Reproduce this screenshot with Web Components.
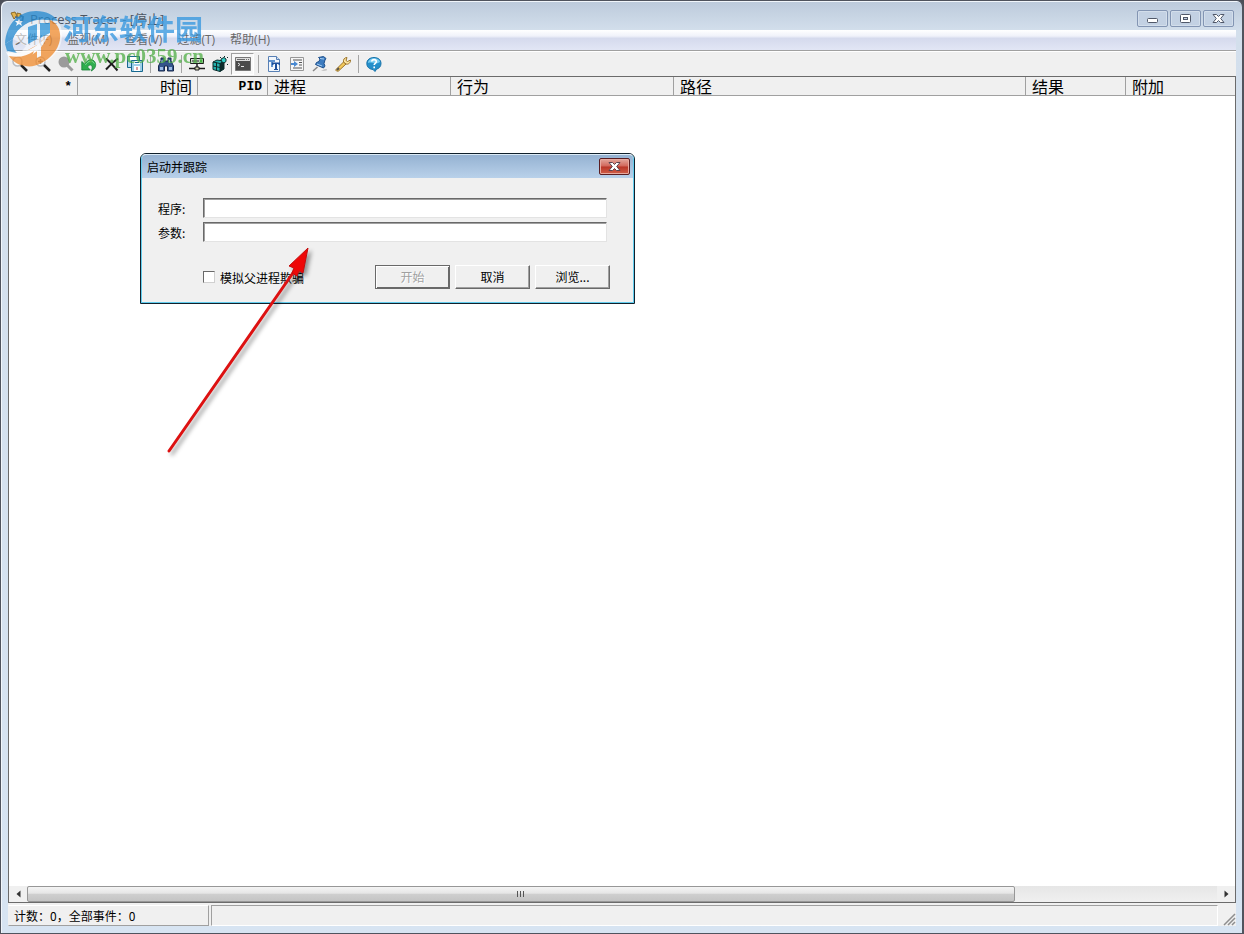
<!DOCTYPE html>
<html lang="zh-CN">
<head>
<meta charset="UTF-8">
<meta name="viewport" content="width=device-width, initial-scale=1">
<title>Process Tracer</title>
<style>
  html, body {
    height: 100%;
    margin: 0;
    background: #ffffff;
    overflow: hidden;
  }
  body {
    font-family: "Open Sans", "Noto Sans CJK SC", sans-serif;
    font-size: 12px;
    color: #000000;
  }
</style>
</head>
<body>
<app-window>
  <title-bar slot="title">Process Tracer - [停止]</title-bar>
  <menu-bar slot="menu">
    <menu-item>文件(F)</menu-item>
    <menu-item>监视(M)</menu-item>
    <menu-item>查看(V)</menu-item>
    <menu-item>过滤(T)</menu-item>
    <menu-item>帮助(H)</menu-item>
  </menu-bar>
  <tool-bar slot="tools"></tool-bar>
  <event-list></event-list>
  <scroll-bar></scroll-bar>
  <status-bar slot="status">计数：0，全部事件：0</status-bar>
  <trace-dialog slot="overlay"></trace-dialog>
  <site-mark slot="overlay"></site-mark>
  <pointer-arrow slot="overlay"></pointer-arrow>
</app-window>

<script>
class AppWindow extends HTMLElement {
  constructor() {
    super();

    this.attachShadow({ mode: "open" });

    this.shadowRoot.innerHTML = `
        <style>
            :host {
                display: block;
                height: 100%;
                background: #4b4f58;
            }
            .frame {
                position: relative;
                box-sizing: border-box;
                height: 100%;
                display: flex;
                flex-direction: column;
                padding: 0 6px 7px 7px;
                border: 1px solid #50545e;
                border-right-width: 2px;
                border-radius: 7px 7px 0 0;
                background: linear-gradient(#bccadb 0px, #d3dfec 30px, #d7e4f2 100%);
                box-shadow: inset 1px 1px 0 #f1f6fb;
            }
            .client {
                flex: 1;
                min-height: 0;
                display: flex;
                flex-direction: column;
                background: #f0f0f0;
            }
            .view {
                flex: 1;
                min-height: 0;
                display: flex;
                flex-direction: column;
                background: #ffffff;
                border: 1px solid #6b6b6b;
            }
        </style>
        <div class="frame">
            <slot name="title"></slot>
            <div class="client">
                <slot name="menu"></slot>
                <slot name="tools"></slot>
                <div class="view"><slot></slot></div>
                <slot name="status"></slot>
            </div>
            <slot name="overlay"></slot>
        </div>
    `;
  }
}

customElements.define("app-window", AppWindow);


class TitleBar extends HTMLElement {
  constructor() {
    super();

    this.attachShadow({ mode: "open" });

    this.shadowRoot.innerHTML = `
        <style>
            :host {
                display: flex;
                align-items: center;
                height: 29px;
                color: #4c5562;
            }
            .icon {
                margin: 4px 5px 0 2px;
            }
            .text {
                flex: 1;
                padding-top: 7px;
                font-size: 13px;
                line-height: 16px;
            }
            .buttons {
                display: flex;
                gap: 2px;
                padding-top: 6px;
                margin-right: 2px;
            }
            button {
                width: 31px;
                height: 17px;
                padding: 0;
                display: flex;
                align-items: center;
                justify-content: center;
                border: 1px solid #8395b3;
                border-radius: 2px;
                background: #c3d1e3;
                box-shadow: inset 0 0 0 1px #d3deeb;
            }
        </style>
        <svg class="icon" width="15" height="14" viewBox="0 0 15 14">
            <path d="M1 2l4-1 2 4-3 3zM7 2l4 1-1 4-3-1z" fill="#e4b44e" stroke="#8c6b29"/>
            <path d="M5 6l4 1 1 5M10 4l3 2-1 5" fill="none" stroke="#4f6f91" stroke-width="2"/>
        </svg>
        <span class="text"><slot></slot></span>
        <div class="buttons">
            <button aria-label="最小化">
                <svg width="13" height="13" viewBox="0 0 13 13"><rect x="1.500" y="6.500" width="10" height="4" rx="1" fill="#ffffff" stroke="#505869"/></svg>
            </button>
            <button aria-label="最大化">
                <svg width="13" height="13" viewBox="0 0 13 13"><rect x="1.500" y="2.500" width="10" height="8" rx="1" fill="#ffffff" stroke="#505869"/><rect x="4.500" y="5.500" width="4" height="2" fill="#c3d1e3" stroke="#505869"/></svg>
            </button>
            <button aria-label="关闭">
                <svg width="13" height="13" viewBox="0 0 13 13"><path d="M1 2.500h3.500l2 2 2-2H12L8.700 6.500l3.300 4H8.500l-2-2-2 2H1l3.300-4z" fill="#ffffff" stroke="#505869" stroke-linejoin="round"/></svg>
            </button>
        </div>
    `;
  }
}

customElements.define("title-bar", TitleBar);


class MenuBar extends HTMLElement {
  constructor() {
    super();

    this.attachShadow({ mode: "open" });

    this.shadowRoot.innerHTML = `
        <style>
            :host {
                display: flex;
                align-items: center;
                height: 20px;
                color: #696969;
                background: linear-gradient(#ffffff 0%, #f0f2fa 30%, #d5daed 42%, #e2e6f5 100%);
                border-bottom: 1px solid #a0a0a0;
            }
        </style>
        <slot></slot>
    `;
  }
}

customElements.define("menu-bar", MenuBar);


class MenuItem extends HTMLElement {
  constructor() {
    super();

    this.attachShadow({ mode: "open" });

    this.shadowRoot.innerHTML = `
        <style>
            :host {
                display: block;
            }
            button {
                font: inherit;
                line-height: 18px;
                color: inherit;
                padding: 0 8px 0 7px;
                border: 0;
                background: none;
            }
        </style>
        <button><slot></slot></button>
    `;
  }
}

customElements.define("menu-item", MenuItem);


const LENS = `<circle cx="5.500" cy="5.500" r="4.500" fill="#f4f8fb" stroke="#b8bcc2" stroke-width="1.500"/><path d="M9 9l6 6" stroke="#222222" stroke-width="2.500"/>`;

const ICONS = {
  zoom: LENS,
  zoomIn: LENS + `<path d="M3 5.500h5M5.500 3v5" stroke="#7a7a7a" stroke-width="1.500"/>`,
  zoomOff: `<circle cx="6" cy="6" r="5.500" fill="#9b9b9b"/><path d="M9 9l5.500 5.500" stroke="#9b9b9b" stroke-width="3"/>`,
  undo: `<path d="M.8 5.500V14h8.500L6.500 11C8 8.500 10.200 8.300 11 10.500c.4 1.500 0 3-.8 4.500 3.300-1.500 5-4.500 4.300-7.500C13.500 2.800 7.500 2 3.700 8z" fill="#2fae4e" stroke="#168036" stroke-width=".8"/><path d="M4.500 8.800C7 4.500 11.500 4 13.300 7.500" fill="none" stroke="#8be29d"/>`,
  clear: `<path d="M2 2.500C6 6 9.500 10 13.500 14.500M14 2.500C9.500 5.500 5.500 9.500 2 13.500" fill="none" stroke="#1d1d1d" stroke-width="2"/>`,
  save: `<path d="M.5.500h12v11H.5z" fill="#b5dbef" stroke="#17688f"/><path d="M3 1h7v3.500H3z" fill="#ffffff"/><path d="M4.500 4.500h11v11h-11z" fill="#9fcfe8" stroke="#17688f"/><path d="M7 5h6v3H7zM7 10h6v5H7z" fill="#ffffff"/><path d="M8 6.500h4" stroke="#17688f"/><path d="M10 11v3" stroke="#b03a3a"/>`,
  find: `<path d="M3 2h3v3h4V2h3v3l2.500 5v5h-6v-5h-3v5h-6v-5L3 5z" fill="#34558c" stroke="#17294d"/><path d="M2 11h3v3H2zM11 11h3v3h-3z" fill="#9bbbe6"/><path d="M4 4v3M11.500 4v3" stroke="#b9d0f0"/>`,
  net: `<path d="M1.500 2.500h13v5h-13z" fill="#d5dcd5" stroke="#1d1d1d"/><path d="M3 5h7" stroke="#1d1d1d"/><path d="M11 4h2v2h-2z" fill="#29c13b"/><path d="M8 8v4M0 12.500h6M10 12.500h6" stroke="#1d1d1d" stroke-width="1.500"/><path d="M6 11h4v3H6z" fill="#cfd0b0" stroke="#1d1d1d"/>`,
  registry: `<path d="M1 6l4-2 7 1v8l-4 2.500-7-2z" fill="#22b0ad" stroke="#0c2b2b"/><path d="M8 7.500L12 5v8l-4 2.500z" fill="#0c2b2b"/><path d="M1 6l7 1.500L12 5M8 7.500v8M4.500 6.500v8M1 10l7 1.500" fill="none" stroke="#0c2b2b"/><path d="M9 3l3-1.500L14 3v2.500L12 7 9.500 5.500z" fill="#33cfc9" stroke="#0c2b2b"/><path d="M8 1.500h1M12 .5h1M15 1.500h1M15 8.500h1" stroke="#0c2b2b"/>`,
  console: `<path d="M.5 1.500h15v13H.5z" fill="#4a4a4a" stroke="#777777"/><path d="M1 2h14v3H1z" fill="#dcdcdc"/><path d="M2 3.500h8M11 3.500h1M13 3.500h1" stroke="#6b6b6b"/><path d="M3 7l2 1.500L3 10M6 10.500h3" fill="none" stroke="#e4e4e4"/>`,
  font: `<path d="M2.500.500h8l3 3v12h-11z" fill="#f1f6fc" stroke="#5880b5"/><path d="M10.500.500v3h3" fill="#cfe0f2" stroke="#5880b5"/><path d="M3 4h6v2H7v5H5V6H3z" fill="#5c91cf"/><path d="M6 6.500h8V9h-1.500V8H11v5h1v1H8v-1h1V8H7.500v1H6z" fill="#1c4f9c"/>`,
  indent: `<path d="M1.500 1.500h13v13h-13z" fill="#f6f6f6" stroke="#979797"/><path d="M4 4h9M10 6.500h3M10 9h3M4 12h9" stroke="#555555"/><path d="M2 7h3V5l4 3-4 3V9H2z" fill="#4a8ad2"/>`,
  pin: `<path d="M9 14.500c3-1 5-2 6-1s-3 2-6 1z" fill="#c5c5c5"/><path d="M1 15l4.500-4" stroke="#888888" stroke-width="1.500"/><path d="M6.500 1.500l5-1 2.500 2-1 1.500-1 3.500 1 2.500-1.500 2-8-3.500 1-2 2.500-1 1-2.500z" fill="#3d7cc0" stroke="#1d4f8b"/><path d="M8 2.500l4 .5M5 8l5 2" stroke="#a9d0f2"/>`,
  wrench: `<path d="M1 13.500L8.500 6 11 8l-7.500 7C2 15.500.500 15 1 13.500z" fill="#f2c85a" stroke="#9c742b"/><path d="M8.500 6C8 3.500 9.500 1.500 12 1.500l-1 3 1.500 1L15.500 4C15.800 6.500 13.500 8.800 11 8z" fill="#fbe4a0" stroke="#9c742b"/><path d="M2 14l2-2" stroke="#5a554b" stroke-width="2"/>`,
  help: `<path d="M8 1.500c4 0 7 2.300 7 6 0 3-2 5-4.500 5.700L9 15.500l-2-2C3.500 13.300.8 11 .8 7.500c0-3.700 3.200-6 7.200-6z" fill="#248fca" stroke="#1973a9"/><path d="M2 7C2 4 5 2.300 8 2.300S14 4 14 6C10 9 6 5.500 2 7z" fill="#79cdf2"/><path d="M5.800 5.500C6 3 10.500 3 10.300 5.800 10.200 7.300 8.200 7.400 8.200 9M8.200 10.500v1.700" fill="none" stroke="#ffffff" stroke-width="1.600"/>`
};

const TOOLS = [
  ["zoom", "放大镜"], ["zoomIn", "放大"], ["zoomOff", "停用"], ["undo", "撤销"], ["clear", "清除"], ["save", "保存"],
  null,
  ["find", "查找"],
  null,
  ["net", "网络"], ["registry", "注册表"], ["console", "控制台"],
  null,
  ["font", "字体"], ["indent", "缩进"], ["pin", "置顶"], ["wrench", "选项"],
  null,
  ["help", "关于"]
];

class ToolBar extends HTMLElement {
  constructor() {
    super();

    this.attachShadow({ mode: "open" });

    this.shadowRoot.innerHTML = `
        <style>
            :host {
                display: flex;
                align-items: center;
                height: 25px;
                box-sizing: border-box;
                border-top: 1px solid #ffffff;
                background: #f0f0f0;
            }
            button {
                width: 23px;
                height: 22px;
                padding: 0;
                display: flex;
                align-items: center;
                justify-content: center;
                border: 1px solid transparent;
                background: none;
            }
            button[aria-pressed="true"] {
                border-color: #a0a0a0 #ffffff #ffffff #a0a0a0;
                background: #f8f8f8;
            }
            .line {
                width: 1px;
                height: 18px;
                margin: 0 3px 0 4px;
                background: #a5a5a5;
            }
        </style>
    `;

    TOOLS.forEach((tool) => {
      if (!tool) {
        const line = document.createElement("span");
        line.classList.add("line");
        this.shadowRoot.appendChild(line);
        return;
      }
      const button = document.createElement("button");
      button.setAttribute("aria-label", tool[1]);
      if (tool[0] === "console") {
        button.setAttribute("aria-pressed", "true");
      }
      button.innerHTML = `<svg width="16" height="16" viewBox="0 0 16 16" fill="none">${ICONS[tool[0]]}</svg>`;
      this.shadowRoot.appendChild(button);
    });
  }
}

customElements.define("tool-bar", ToolBar);


class EventList extends HTMLElement {
  constructor() {
    super();

    this.attachShadow({ mode: "open" });

    this.shadowRoot.innerHTML = `
        <style>
            :host {
                display: block;
                flex: 1;
                min-height: 0;
            }
            table {
                width: 100%;
                table-layout: fixed;
                border-collapse: separate;
                border-spacing: 0;
            }
            th {
                box-sizing: border-box;
                height: 19px;
                padding: 0 5px 0 6px;
                font-family: "Noto Sans CJK SC", sans-serif;
                font-size: 16px;
                line-height: 18px;
                font-weight: 400;
                text-align: left;
                white-space: nowrap;
                background: #f0f0f0;
                border-right: 1px solid #a0a0a0;
                border-bottom: 1px solid #a0a0a0;
            }
            th:last-child {
                border-right: 0;
            }
            .right {
                text-align: right;
            }
            .mono {
                padding-top: 2px;
                font-family: "Liberation Mono", monospace;
                font-size: 13px;
                line-height: 16px;
                font-weight: 700;
            }
            .c1 { width: 69px; }
            .c2 { width: 120px; }
            .c3 { width: 70px; }
            .c4 { width: 183px; }
            .c5 { width: 223px; }
            .c6 { width: 352px; }
            .c7 { width: 100px; }
        </style>
        <table>
            <thead>
                <tr>
                    <th class="c1 right mono">*</th>
                    <th class="c2 right">时间</th>
                    <th class="c3 right mono">PID</th>
                    <th class="c4">进程</th>
                    <th class="c5">行为</th>
                    <th class="c6">路径</th>
                    <th class="c7">结果</th>
                    <th>附加</th>
                </tr>
            </thead>
            <tbody></tbody>
        </table>
    `;
  }
}

customElements.define("event-list", EventList);


class ScrollBar extends HTMLElement {
  constructor() {
    super();

    this.attachShadow({ mode: "open" });

    this.shadowRoot.innerHTML = `
        <style>
            :host {
                display: flex;
                height: 16px;
                background: linear-gradient(#e6e6e6, #f0f0f0);
            }
            button {
                width: 18px;
                padding: 0;
                display: flex;
                align-items: center;
                justify-content: center;
                border: 0;
                background: #f0f0f0;
            }
            .track {
                flex: 1;
                display: flex;
            }
            .thumb {
                box-sizing: border-box;
                width: 83%;
                display: flex;
                align-items: center;
                justify-content: center;
                gap: 2px;
                border: 1px solid #979797;
                border-radius: 2px;
                background: linear-gradient(#f4f4f4 0%, #e6e6e6 45%, #cfcfcf 50%, #c4c4c4 100%);
            }
            .thumb i {
                width: 1px;
                height: 6px;
                background: #555555;
            }
        </style>
        <button aria-label="向左"><svg width="5" height="8" viewBox="0 0 5 8"><path d="M4.500.500v7L.500 4z" fill="#333333"/></svg></button>
        <div class="track"><div class="thumb"><i></i><i></i><i></i></div></div>
        <button aria-label="向右"><svg width="5" height="8" viewBox="0 0 5 8"><path d="M.500.500v7L4.500 4z" fill="#333333"/></svg></button>
    `;
  }
}

customElements.define("scroll-bar", ScrollBar);


class StatusBar extends HTMLElement {
  constructor() {
    super();

    this.attachShadow({ mode: "open" });

    this.shadowRoot.innerHTML = `
        <style>
            :host {
                display: flex;
                gap: 2px;
                height: 21px;
                padding-top: 2px;
                background: #f0f0f0;
                font-family: "Noto Sans CJK SC", sans-serif;
            }
            .cell {
                box-sizing: border-box;
                line-height: 20px;
                border: 1px solid #a0a0a0;
                border-right-color: #ffffff;
                border-bottom-color: #ffffff;
            }
            .count {
                width: 201px;
                padding-left: 5px;
                border-color: #ffffff #a0a0a0 #a0a0a0 #f0f0f0;
            }
            .rest {
                flex: 1;
            }
            svg {
                align-self: flex-end;
                margin-left: 3px;
            }
        </style>
        <div class="cell count"><slot></slot></div>
        <div class="cell rest"></div>
        <svg width="13" height="13" viewBox="0 0 13 13"><path d="M1 12L12 1M5 12l7-7M9 12l3-3" stroke="#8e8e8e" stroke-width="1.500"/></svg>
    `;
  }
}

customElements.define("status-bar", StatusBar);


class PushButton extends HTMLElement {
  constructor() {
    super();

    this.attachShadow({ mode: "open" });

    this.shadowRoot.innerHTML = `
        <style>
            :host {
                display: block;
            }
            button {
                width: 75px;
                height: 24px;
                padding: 0;
                font: inherit;
                line-height: 20px;
                color: #000000;
                background: #f0f0f0;
                border: 1px solid;
                border-color: #ffffff #696969 #696969 #ffffff;
                box-shadow: inset -1px -1px 0 #a0a0a0;
            }
            button:disabled {
                color: #a0a0a0;
                text-shadow: 1px 1px 0 #ffffff;
                border-color: #696969;
                box-shadow: inset 1px 1px 0 #ffffff, inset -1px -1px 0 #696969;
            }
        </style>
        <button><slot></slot></button>
    `;
  }

  connectedCallback() {
    this.shadowRoot.querySelector("button").disabled = this.hasAttribute("disabled");
  }
}

customElements.define("push-button", PushButton);


class TraceDialog extends HTMLElement {
  constructor() {
    super();

    this.attachShadow({ mode: "open" });

    this.shadowRoot.innerHTML = `
        <style>
            /* floats over the event list */
            :host {
                position: absolute;
                left: 139px;
                top: 152px;
                box-sizing: border-box;
                width: 495px;
                border: 1px solid #10202c;
                border-radius: 6px 6px 0 0;
                background: #f0f0f0;
                font-family: "Noto Sans CJK SC", sans-serif;
            }
            .inner {
                border: 1px solid #62cdee;
                border-top-color: #dcebf7;
                border-radius: 5px 5px 0 0;
                overflow: hidden;
            }
            header {
                display: flex;
                justify-content: space-between;
                align-items: center;
                height: 23px;
                padding: 0 3px 0 5px;
                background: linear-gradient(#95b2d2, #b9d1ea);
            }
            .close {
                width: 31px;
                height: 17px;
                padding: 0;
                display: flex;
                align-items: center;
                justify-content: center;
                border: 1px solid #5a1e22;
                border-radius: 2px;
                background: linear-gradient(#e3a79c 0%, #d1665a 48%, #b93527 52%, #d0604a 100%);
                box-shadow: inset 0 0 0 1px #e8aaa0;
            }
            .fields {
                display: grid;
                grid-template-columns: 45px 1fr;
                row-gap: 4px;
                align-items: center;
                padding: 20px 26px 0 16px;
            }
            .fields input {
                box-sizing: border-box;
                width: 100%;
                height: 20px;
                padding: 0 3px;
                font: inherit;
                border: 1px solid;
                border-color: #696969 #e3e3e3 #e3e3e3 #696969;
                box-shadow: inset 1px 1px 0 #a0a0a0;
                background: #ffffff;
                outline: none;
            }
            footer {
                display: flex;
                align-items: center;
                gap: 5px;
                padding: 23px 23px 13px 61px;
            }
            .check {
                flex: 1;
                display: flex;
                align-items: center;
                gap: 5px;
            }
            .check input {
                appearance: none;
                width: 12px;
                height: 12px;
                margin: 0;
                background: #ffffff;
                border: 1px solid;
                border-color: #696969 #d0d0d0 #d0d0d0 #696969;
            }
        </style>
        <div class="inner" role="dialog" aria-labelledby="title">
            <header>
                <span id="title">启动并跟踪</span>
                <button class="close" aria-label="关闭">
                    <svg width="13" height="11" viewBox="0 0 13 11"><path d="M1 1.500h3.500l2 2 2-2H12L8.700 5.500l3.300 4H8.500l-2-2-2 2H1l3.300-4z" fill="#ffffff" stroke="#5b4450" stroke-linejoin="round"/></svg>
                </button>
            </header>
            <div class="fields">
                <label for="program">程序:</label>
                <input id="program" type="text">
                <label for="args">参数:</label>
                <input id="args" type="text">
            </div>
            <footer>
                <div class="check">
                    <input id="spoof" type="checkbox">
                    <label for="spoof">模拟父进程欺骗</label>
                </div>
                <push-button disabled>开始</push-button>
                <push-button>取消</push-button>
                <push-button>浏览...</push-button>
            </footer>
        </div>
    `;
  }
}

customElements.define("trace-dialog", TraceDialog);


class SiteMark extends HTMLElement {
  constructor() {
    super();

    this.attachShadow({ mode: "open" });

    this.shadowRoot.innerHTML = `
        <style>
            /* translucent stamp over the window corner */
            :host {
                position: absolute;
                left: 3px;
                top: 8px;
                display: flex;
                pointer-events: none;
            }
            svg {
                opacity: 0.75;
            }
            .name {
                font: 700 28px/32px "Noto Sans CJK SC", sans-serif;
                color: #3b9ae0;
                opacity: 0.8;
                padding-top: 3px;
            }
            .site {
                padding-left: 2px;
                font: 700 21px/24px "Liberation Serif", serif;
                color: #4fae45;
                opacity: 0.75;
            }
        </style>
        <svg width="59" height="60" viewBox="0 0 59 60">
            <path d="M1 35C2 14 16 2 32 2c10 0 18 4 22 10l-12-1C30 9 14 16 9 30z" fill="#2489cf"/>
            <path d="M9 30C14 16 30 9 42 11l12 1c4 6 5 14 3 22-4 14-18 23-32 22L12 50l10-13z" fill="#ffffff" fill-opacity=".7"/>
            <path d="M24 18l9-3v15l-9 5zM36 14l10 0v10l-10 5z" fill="#2f96da"/>
            <path d="M1 35L9 30C8 36 9 40 13 44L3 42z" fill="#2489cf"/>
            <path d="M46 11c13 5 13 23 3 34-8 9-19 14-28 12l3-16 9-5v13l4-2V32l9-6z" fill="#f18b2c"/>
            <path d="M2 43c16 4 32-4 42-18-6 20-24 28-40 22z" fill="#ffffff"/>
            <path d="M5 47c10 2 18 0 25-5l-6 15C15 57 9 53 5 47z" fill="#f18b2c"/>
            <path d="M15 9l1 3h3l-2 2 1 3-3-2-3 2 1-3-2-2h3z" fill="#ffffff"/>
        </svg>
        <div>
            <div class="name">河东软件园</div>
            <div class="site">www.pc0359.cn</div>
        </div>
    `;
  }
}

customElements.define("site-mark", SiteMark);


class PointerArrow extends HTMLElement {
  constructor() {
    super();

    this.attachShadow({ mode: "open" });

    this.shadowRoot.innerHTML = `
        <style>
            /* annotation drawn on top of the dialog */
            :host {
                position: absolute;
                left: 159px;
                top: 239px;
                pointer-events: none;
            }
            svg {
                display: block;
                filter: drop-shadow(3px 3px 2px rgba(0, 0, 0, 0.4));
            }
        </style>
        <svg width="160" height="226" viewBox="0 0 160 226">
            <path d="M9 211L135 30" stroke="#dd1111" stroke-width="3" stroke-linecap="round"/>
            <path d="M148 8l-19 18 5 2-2 5 5 3 2-5 4 2z" fill="#ee0808" stroke="#c40d0d"/>
        </svg>
    `;
  }
}

customElements.define("pointer-arrow", PointerArrow);
</script>
</body>
</html>
